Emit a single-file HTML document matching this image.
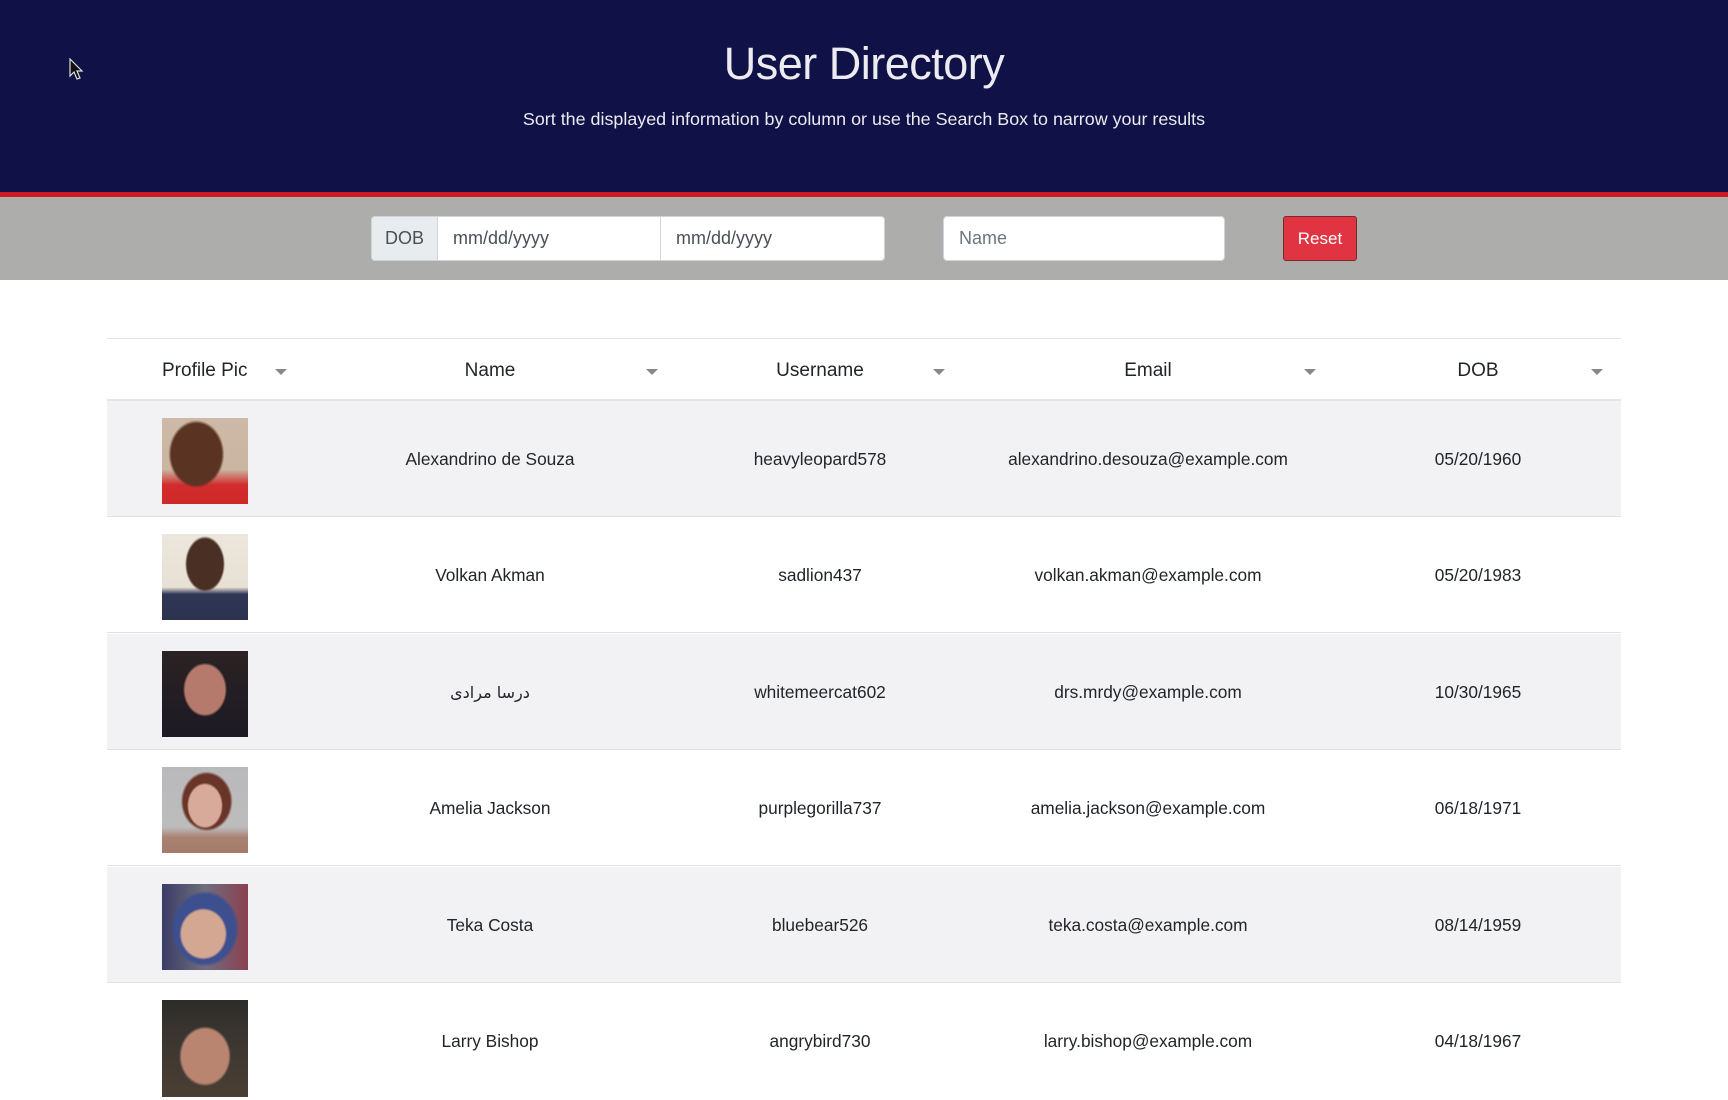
<!DOCTYPE html>
<html><head><meta charset="utf-8"><style>
*{box-sizing:border-box;margin:0;padding:0}
body{width:1728px;height:1080px;overflow:hidden;background:#fff;font-family:"Liberation Sans","DejaVu Sans",sans-serif;color:#212529;position:relative}
.hdr{position:absolute;left:0;top:0;width:1728px;height:192px;background:#0f1147;color:#ecebef;text-align:center}
.hdr h1{position:absolute;left:0;right:0;top:38px;font-size:45px;font-weight:normal;letter-spacing:-0.5px}
.hdr p{position:absolute;left:0;right:0;top:109px;font-size:17.9px}
.red{position:absolute;left:0;top:192px;width:1728px;height:5px;background:#cc1a22}
.bar{position:absolute;left:0;top:197px;width:1728px;height:83px;background:#adadac}
.inp{position:absolute;top:216px;height:45px;background:#fff;border:1px solid #ced4da;font-size:18px;color:#495057;line-height:43px}
.btn{position:absolute;left:1283px;top:216px;width:74px;height:45px;background:#e03443;border:1px solid #7a2a2f;border-radius:3px;color:#fff;font-size:17px;text-align:center;line-height:43px}
.tline{position:absolute;left:107px;width:1514px;height:2px;background:#e3e5e8}
.row{position:absolute;left:107px;width:1514px;height:116px;border-bottom:1px solid #dee2e6}
.row.s{background:#f2f2f5}
.c{position:absolute;top:0;height:116px;line-height:117px;font-size:17.3px;transform:translateX(-50%);white-space:nowrap}
.th{position:absolute;top:360px;font-size:19px;transform:translateX(-50%);white-space:nowrap}
.ar{position:absolute;top:369px;width:0;height:0;border-left:6px solid transparent;border-right:6px solid transparent;border-top:6px solid #888}
.av{position:absolute;left:55px;top:17px;width:86px;height:86px}
</style></head><body>
<div class="hdr"><h1>User Directory</h1><p>Sort the displayed information by column or use the Search Box to narrow your results</p>
<svg style="position:absolute;left:69px;top:58px" width="16" height="24" viewBox="0 0 16 24"><path d="M1 1 L1 18 L5 14 L8 21 L11 20 L8 13 L13 13 Z" fill="#111" stroke="#ddd" stroke-width="1.2"/></svg></div>
<div class="red"></div>
<div class="bar"></div>
<div class="inp" style="left:371px;width:514px;border-radius:4px"></div>
<div class="inp" style="left:371px;width:67px;background:#e9ecef;border-radius:4px 0 0 4px;text-align:center;color:#495057">DOB</div>
<div class="inp" style="left:437px;width:224px;padding-left:15px;border-left:1px solid #ced4da;border-right:none">mm/dd/yyyy</div>
<div class="inp" style="left:660px;width:225px;padding-left:15px;border-radius:0 4px 4px 0">mm/dd/yyyy</div>
<div class="inp" style="left:943px;width:282px;padding-left:15px;border-radius:4px;color:#6c757d">Name</div>
<div class="btn">Reset</div>

<div class="tline" style="top:338px;height:1px"></div>
<div class="th" style="left:162px;transform:none">Profile Pic</div><div class="ar" style="left:275px"></div>
<div class="th" style="left:490px">Name</div><div class="ar" style="left:646px"></div>
<div class="th" style="left:820px">Username</div><div class="ar" style="left:933px"></div>
<div class="th" style="left:1148px">Email</div><div class="ar" style="left:1304px"></div>
<div class="th" style="left:1478px">DOB</div><div class="ar" style="left:1591px"></div>
<div class="tline" style="top:399px"></div>

<div class="row s" style="top:401px"><div class="av" style="background:radial-gradient(ellipse 28px 34px at 40% 42%,#5a3322 90%,transparent 100%),linear-gradient(180deg,#cdb9a7 0%,#c9b5a0 60%,#d22b2b 78%,#cf2a2a 100%)"></div>
<div class="c" style="left:383px">Alexandrino de Souza</div><div class="c" style="left:713px">heavyleopard578</div><div class="c" style="left:1041px">alexandrino.desouza@example.com</div><div class="c" style="left:1371px">05/20/1960</div></div>

<div class="row" style="top:517px"><div class="av" style="background:radial-gradient(ellipse 20px 28px at 50% 35%,#4a3024 90%,transparent 100%),linear-gradient(180deg,#ece6dc 0%,#e8e0d4 62%,#2f3656 70%,#2c3350 100%)"></div>
<div class="c" style="left:383px">Volkan Akman</div><div class="c" style="left:713px">sadlion437</div><div class="c" style="left:1041px">volkan.akman@example.com</div><div class="c" style="left:1371px">05/20/1983</div></div>

<div class="row s" style="top:634px"><div class="av" style="background:radial-gradient(ellipse 22px 27px at 50% 45%,#b57a6b 90%,transparent 100%),linear-gradient(180deg,#2b2223,#1c1a24)"></div>
<div class="c" style="left:383px;font-family:'DejaVu Sans',sans-serif;font-size:16px">درسا مرادی</div><div class="c" style="left:713px">whitemeercat602</div><div class="c" style="left:1041px">drs.mrdy@example.com</div><div class="c" style="left:1371px">10/30/1965</div></div>

<div class="row" style="top:750px"><div class="av" style="background:radial-gradient(ellipse 18px 23px at 50% 45%,#d8aa9a 90%,transparent 100%),radial-gradient(ellipse 26px 30px at 52% 40%,#6a3529 90%,transparent 100%),linear-gradient(180deg,#b9b9bb 0%,#bdbcbd 70%,#a98271 82%,#a57b6a 100%)"></div>
<div class="c" style="left:383px">Amelia Jackson</div><div class="c" style="left:713px">purplegorilla737</div><div class="c" style="left:1041px">amelia.jackson@example.com</div><div class="c" style="left:1371px">06/18/1971</div></div>

<div class="row s" style="top:867px"><div class="av" style="background:radial-gradient(ellipse 24px 26px at 48% 58%,#d4a793 90%,transparent 100%),radial-gradient(ellipse 34px 38px at 50% 52%,#3d4f8f 90%,transparent 100%),linear-gradient(90deg,#3a3d66,#6f6d7d 50%,#8a4050)"></div>
<div class="c" style="left:383px">Teka Costa</div><div class="c" style="left:713px">bluebear526</div><div class="c" style="left:1041px">teka.costa@example.com</div><div class="c" style="left:1371px">08/14/1959</div></div>

<div class="row" style="top:983px;border-bottom:none"><div class="av" style="height:97px;background:radial-gradient(ellipse 26px 30px at 50% 58%,#b98470 90%,transparent 100%),linear-gradient(180deg,#2c2c2a 0%,#3a3530 35%,#4a3f34 100%)"></div>
<div class="c" style="left:383px">Larry Bishop</div><div class="c" style="left:713px">angrybird730</div><div class="c" style="left:1041px">larry.bishop@example.com</div><div class="c" style="left:1371px">04/18/1967</div></div>
</body></html>
